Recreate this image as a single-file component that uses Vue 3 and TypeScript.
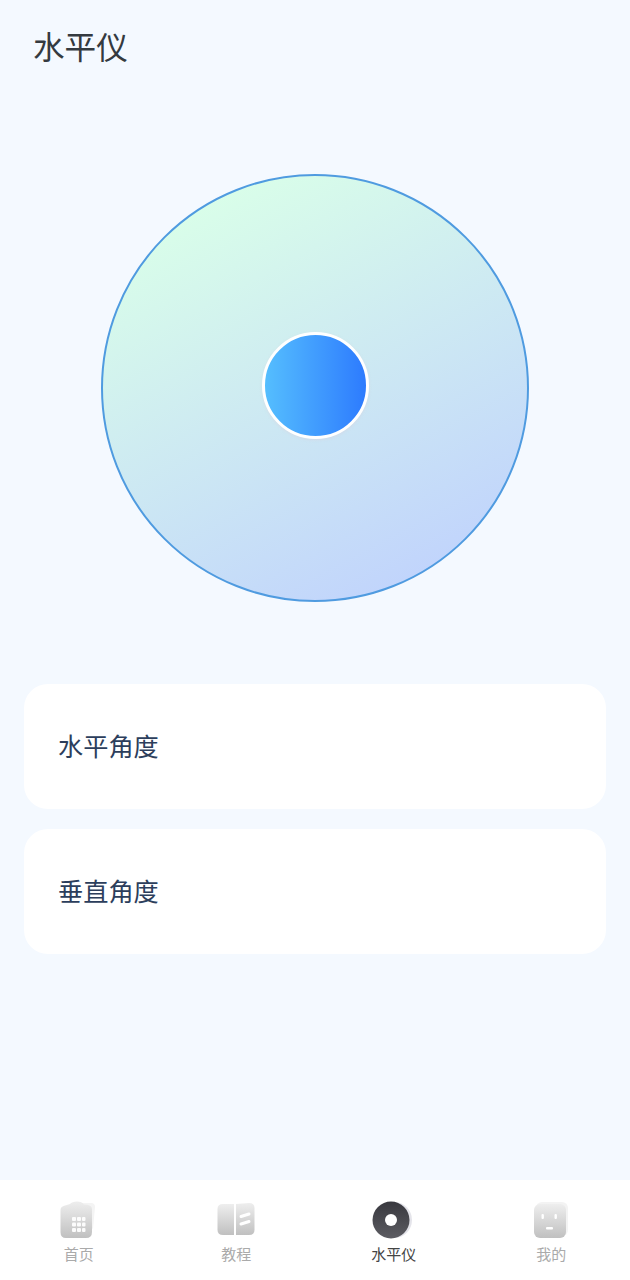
<script setup lang="ts">
interface Tab {
  name: string;
  icon: 'home' | 'book' | 'level' | 'me';
  active?: boolean;
}

const tabs: Tab[] = [
  { name: '首页', icon: 'home' },
  { name: '教程', icon: 'book' },
  { name: '水平仪', icon: 'level', active: true },
  { name: '我的', icon: 'me' }
]

const angles: string[] = ['水平角度', '垂直角度']
</script>

<template>
  <div class="page">
    <h1 class="title">水平仪</h1>

    <div class="dial-wrap">
      <div class="dial">
        <div class="bubble"></div>
      </div>
    </div>

    <div class="cards">
      <div v-for="a in angles" :key="a" class="card">{{ a }}</div>
    </div>

    <nav class="tabbar">
      <div v-for="t in tabs" :key="t.name" class="tab" :class="{ active: t.active }">
        <svg class="icon" width="44" height="44" viewBox="0 0 44 44">
          <defs>
            <linearGradient id="g-grey" x1="0" y1="0" x2="0" y2="1">
              <stop offset="0" stop-color="#eeeeee" />
              <stop offset="1" stop-color="#c0c0c0" />
            </linearGradient>
            <linearGradient id="g-dark" x1="0" y1="0" x2="0" y2="1">
              <stop offset="0" stop-color="#38383e" />
              <stop offset="1" stop-color="#5c5c62" />
            </linearGradient>
          </defs>
          <template v-if="t.icon === 'home'">
            <path d="M18 4 L34 4 Q38 4 38 8 L36 30 L24 20 Z" fill="#f4f4f4" />
            <path d="M3.5 11 Q3.5 8 6.5 7 L13 5 Q15 2.5 20 2.5 Q25 2.5 27 5.5 Q35 5.5 35 10 V33 Q35 39 29 39 H9 Q3.5 39 3.5 33 Z" fill="url(#g-grey)" />
            <g fill="#fff" fill-opacity="0.92">
              <rect x="15" y="18" width="4" height="4" rx="1" />
              <rect x="20" y="18" width="4" height="4" rx="1" />
              <rect x="25" y="18" width="3.5" height="4" rx="1" />
              <rect x="15" y="23.5" width="4" height="4" rx="1" />
              <rect x="20" y="23.5" width="4" height="4" rx="1" />
              <rect x="25" y="23.5" width="3.5" height="4" rx="1" />
              <rect x="15" y="29" width="4" height="4" rx="1" />
              <rect x="20" y="29" width="4" height="4" rx="1" />
              <rect x="25" y="29" width="3.5" height="4" rx="1" />
            </g>
          </template>
          <template v-else-if="t.icon === 'book'">
            <path d="M3.5 10 Q3.5 5 9 5 H20 V36 H9 Q3.5 36 3.5 31 Z" fill="url(#g-grey)" />
            <path d="M22 5 L35 4 Q40.5 4 40.5 9 V31 Q40.5 36 35 36 H22 Z" fill="url(#g-grey)" />
            <path d="M27 17.5 L35 15 M27 25 L35 22.5" stroke="#fff" stroke-width="3" stroke-linecap="round" />
          </template>
          <template v-else-if="t.icon === 'level'">
            <circle cx="22" cy="21" r="18" fill="#e4e4ea" />
            <circle cx="19" cy="21" r="18.5" fill="url(#g-dark)" />
            <circle cx="19" cy="21" r="6" fill="#fff" />
          </template>
          <template v-else>
            <rect x="7" y="3" width="32" height="34" rx="6" fill="#f3f3f3" />
            <rect x="5" y="5" width="32" height="34" rx="6" fill="url(#g-grey)" />
            <rect x="12.5" y="15" width="2.4" height="5" rx="1" fill="#fff" />
            <rect x="25.5" y="15" width="2.4" height="5" rx="1" fill="#fff" />
            <rect x="17" y="28" width="7" height="2.6" rx="1" fill="#fff" />
          </template>
        </svg>
        <span class="label">{{ t.name }}</span>
      </div>
    </nav>
  </div>
</template>

<style scoped>
.page {
  width: 630px;
  height: 1280px;
  background: #f4f9ff;
  display: flex;
  flex-direction: column;
  font-family: "Noto Sans CJK SC", "Noto Sans", sans-serif;
  overflow: hidden;
}

.title {
  margin: 0;
  padding: 23px 0 0 33px;
  height: 44px;
  line-height: 44px;
  font-size: 31.6px;
  font-weight: 400;
  color: #343a40;
}

.dial-wrap {
  margin-top: 107px;
  display: flex;
  justify-content: center;
}

.dial {
  width: 424px;
  height: 424px;
  border: 2px solid #4f9be0;
  border-radius: 50%;
  background: linear-gradient(152deg, #d9fee9 12%, #c1d4fc 88%);
  display: flex;
  align-items: center;
  justify-content: center;
}

.bubble {
  width: 101px;
  height: 101px;
  border: 3px solid #fff;
  border-radius: 50%;
  margin: -6px 0 0 1px;
  background: linear-gradient(90deg, #55befe, #2d7bfe);
  box-shadow: 0 1px 3px rgba(230, 200, 210, 0.35);
}

.cards {
  margin: 82px 24px 0;
  display: flex;
  flex-direction: column;
  gap: 20px;
}

.card {
  height: 125px;
  box-sizing: border-box;
  padding: 0 0 3px 34px;
  display: flex;
  align-items: center;
  background: #fff;
  border-radius: 24px;
  font-size: 25.2px;
  color: #2c3e5c;
}

.tabbar {
  margin-top: auto;
  height: 100px;
  background: #fff;
  display: grid;
  grid-template-columns: repeat(4, 1fr);
}

.tab {
  display: flex;
  flex-direction: column;
  align-items: center;
  padding-top: 19px;
}

.icon {
  display: block;
}

.label {
  margin-top: 0;
  font-size: 15px;
  line-height: 22px;
  color: #aaa;
}

.active .label {
  color: #444;
}
</style>

<style>
html, body {
  margin: 0;
  background: #f4f9ff;
}
</style>
